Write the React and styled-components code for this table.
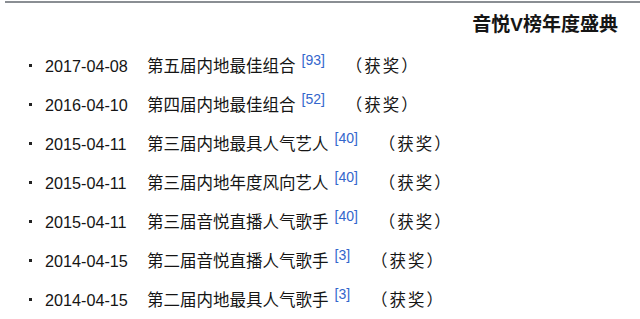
import React from "react";
import styled, { createGlobalStyle } from "styled-components";

const Global = createGlobalStyle`
  html, body { margin: 0; padding: 0; background: #fff; }
  body { font-family: "Liberation Sans", "Noto Sans CJK SC", sans-serif; color: #151515; }
`;

const Page = styled.div`
  width: 640px;
  height: 319px;
  overflow: hidden;
  padding-top: 1px;
  box-sizing: border-box;
`;

const TopRule = styled.div`
  margin-left: 5px;
  border-top: 2px solid #8a8e93;
`;

const Title = styled.h3`
  margin: 10px 0 0;
  padding-right: 22px;
  text-align: right;
  font-family: "Liberation Sans", "Noto Sans CJK SC", sans-serif;
  font-size: 19px;
  line-height: 24px;
  font-weight: bold;
  color: #151515;
`;

const List = styled.ul`
  list-style: none;
  margin: 9px 0 0;
  padding: 0 0 0 29px;
`;

const Item = styled.li`
  position: relative;
  height: 39px;
  line-height: 39px;
  font-size: 16.2px;
  white-space: nowrap;
  &::before {
    content: "";
    position: absolute;
    left: 0;
    top: 18px;
    width: 3px;
    height: 3px;
    background: #222;
  }
`;

const Date = styled.span`
  display: inline-block;
  margin-left: 16px;
  width: 102px;
`;

const Name = styled.span`
  font-family: "Noto Sans CJK SC", sans-serif;
  font-size: 16.5px;
`;

const Ref = styled.sup`
  margin-left: 6px;
  font-size: 14px;
  line-height: 0;
  vertical-align: 7px;
  color: #3366cc;
`;

const Award = styled.span`
  display: inline-block;
  margin-left: 21px;
  letter-spacing: 2px;
  font-family: "Noto Sans CJK SC", sans-serif;
  font-size: 16.5px;
`;

const rows = [
  ["2017-04-08", "第五届内地最佳组合", "93"],
  ["2016-04-10", "第四届内地最佳组合", "52"],
  ["2015-04-11", "第三届内地最具人气艺人", "40"],
  ["2015-04-11", "第三届内地年度风向艺人", "40"],
  ["2015-04-11", "第三届音悦直播人气歌手", "40"],
  ["2014-04-15", "第二届音悦直播人气歌手", "3"],
  ["2014-04-15", "第二届内地最具人气歌手", "3"],
];

export default function App() {
  return (
    <Page>
      <Global />
      <TopRule />
      <Title>音悦V榜年度盛典</Title>
      <List>
        {rows.map(([d, n, r], i) => (
          <Item key={i}>
            <Date>{d}</Date>
            <Name>{n}</Name>
            <Ref>[{r}]</Ref>
            <Award>（获奖）</Award>
          </Item>
        ))}
      </List>
    </Page>
  );
}
